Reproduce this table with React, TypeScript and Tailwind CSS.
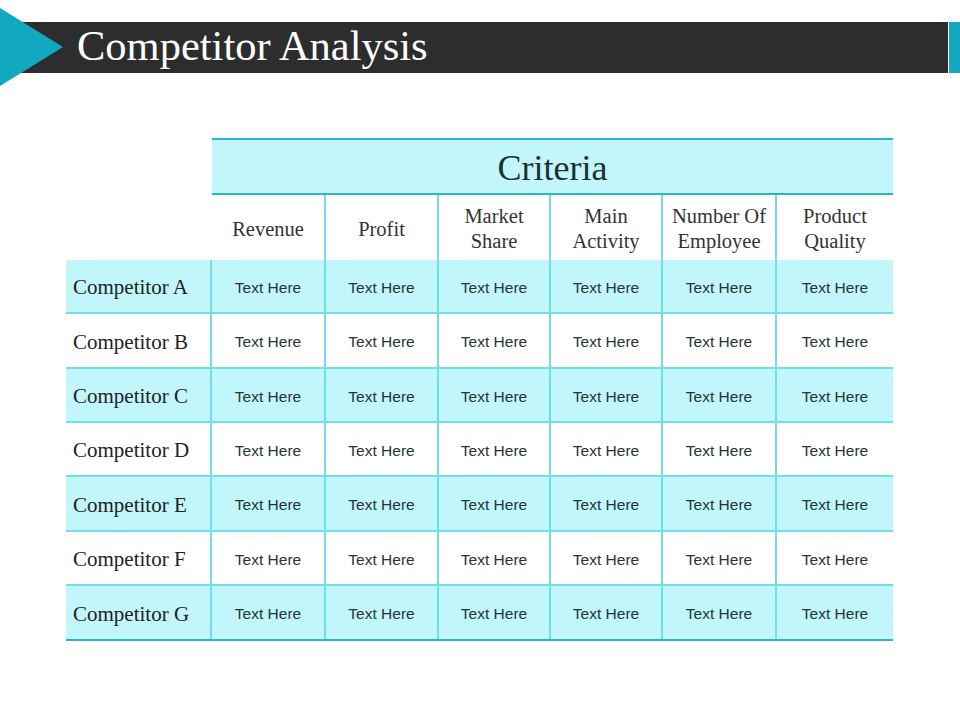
const COLUMNS = [
  { label: ["Revenue"], width: "w-[112px]" },
  { label: ["Profit"], width: "w-[113px]" },
  { label: ["Market", "Share"], width: "w-[112px]" },
  { label: ["Main", "Activity"], width: "w-[112px]" },
  { label: ["Number Of", "Employee"], width: "w-[114px]" },
  { label: ["Product", "Quality"], width: "w-[118px]" },
];

const ROWS = [
  { name: "Competitor A", h: "h-[54px]" },
  { name: "Competitor B", h: "h-[55px]" },
  { name: "Competitor C", h: "h-[54px]" },
  { name: "Competitor D", h: "h-[54px]" },
  { name: "Competitor E", h: "h-[55px]" },
  { name: "Competitor F", h: "h-[54px]" },
  { name: "Competitor G", h: "h-[55px]" },
];

const serif = "font-['Liberation_Serif','Times_New_Roman',serif]";
const sans = "font-['Liberation_Sans',Arial,sans-serif]";

function TitleBar() {
  return (
    <div className="relative pt-[22px]">
      {/* dark bar + cyan end stripe */}
      <div className="flex h-[51px]">
        <div className="flex flex-1 items-center bg-[#2d2d2d] pl-[77px]">
          <h1 className={`${serif} -mt-[2px] text-[42.5px] leading-none text-white`}>
            Competitor Analysis
          </h1>
        </div>
        <div className="ml-px w-[11px] bg-[#11a8c0]" />
      </div>
      {/* triangle pointer over the bar */}
      <svg
        className="absolute left-0 top-[8px]"
        width="63"
        height="78"
        viewBox="0 0 63 78"
      >
        <polygon points="0,0 63,39 0,78" fill="#11a8c0" />
      </svg>
    </div>
  );
}

function CriteriaTable() {
  return (
    <div className="ml-[66px] mt-[65px] flex w-[827px] flex-col">
      {/* Criteria band */}
      <div className="flex">
        <div className="w-[146px] shrink-0" />
        <div
          className={`${serif} flex h-[57px] flex-1 items-center justify-center border-y-2 border-[#2bb4c4] bg-[#c1f6fb] pt-[3px] text-[36px] text-[#1e2f33]`}
        >
          Criteria
        </div>
      </div>

      {/* column headings */}
      <div className="flex h-[65px]">
        <div className="w-[146px] shrink-0" />
        {COLUMNS.map((c, i) => (
          <div
            key={i}
            className={`${c.width} ${serif} flex shrink-0 flex-col items-center justify-center pt-[3px] text-center text-[20.5px] leading-[25px] text-[#333] ${
              i > 0 ? "border-l-2 border-[#72deea]" : ""
            }`}
          >
            {c.label.map((l) => (
              <span key={l}>{l}</span>
            ))}
          </div>
        ))}
      </div>

      {/* competitor rows */}
      {ROWS.map((r, ri) => {
        const shaded = ri % 2 === 0;
        const last = ri === ROWS.length - 1;
        return (
          <div
            key={r.name}
            className={`flex ${r.h} ${shaded ? "bg-[#c1f6fb]" : "bg-white"} ${
              last ? "border-b-2 border-[#2bb4c4]" : "border-b-2 border-[#72deea]"
            }`}
          >
            <div
              className={`${serif} flex w-[146px] shrink-0 items-center border-r-2 border-[#72deea] pl-[7px] pt-[4px] text-[21px] text-[#222]`}
            >
              {r.name}
            </div>
            {COLUMNS.map((c, i) => (
              <div
                key={i}
                className={`${c.width} ${sans} flex shrink-0 items-center justify-center pt-[3px] text-[15.5px] text-[#263436] ${
                  i > 0 ? "border-l-2 border-[#72deea]" : ""
                }`}
              >
                Text Here
              </div>
            ))}
          </div>
        );
      })}
    </div>
  );
}

export default function App() {
  return (
    <div className="h-[720px] w-[960px] overflow-hidden bg-white">
      <TitleBar />
      <CriteriaTable />
    </div>
  );
}
